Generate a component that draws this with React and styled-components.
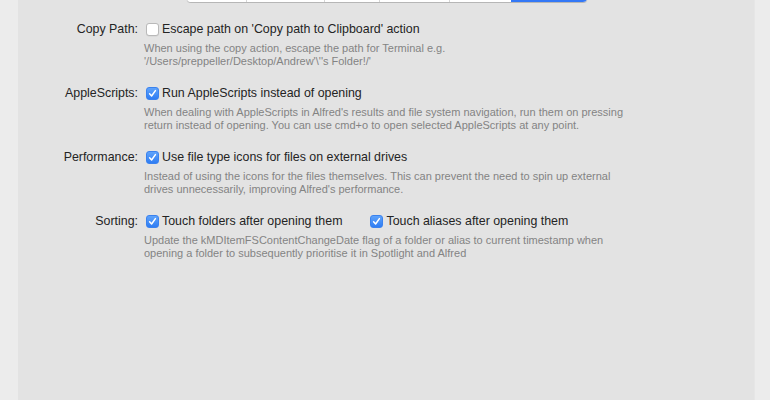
import React from "react";
import styled, { createGlobalStyle } from "styled-components";

const Global = createGlobalStyle`
  html, body { margin: 0; padding: 0; background: #ececec; }
  body { font-family: "Liberation Sans", Arial, sans-serif; }
`;

const Page = styled.div`
  width: 770px;
  height: 400px;
  display: flex;
  background: #ececec;
`;

const Panel = styled.div`
  margin-left: 18px;
  width: 736px;
  height: 400px;
  background: #e3e3e3;
  border-right: 1px solid #e6e6e6;
  display: flex;
  flex-direction: column;
`;

const TabClip = styled.div`
  height: 3px;
  overflow: hidden;
  display: flex;
  align-items: flex-end;
  padding-left: 169px;
`;

const TabBar = styled.div`
  display: flex;
  height: 22px;
  flex-shrink: 0;
  border-radius: 4px;
  background: #fff;
  box-shadow: 0 1px 1px rgba(0, 0, 0, 0.22);
  margin-bottom: 1px;
  overflow: hidden;
`;

const Tab = styled.div`
  width: ${(p) => p.$w}px;
  height: 22px;
  background: ${(p) => (p.$active ? "#3478f6" : "#ffffff")};
  border-left: ${(p) => (p.$first || p.$active ? "none" : "1px solid #d6d6d6")};
  box-sizing: border-box;
`;

const Settings = styled.div`
  padding-top: 18px;
  display: flex;
  flex-direction: column;
  gap: 17px;
`;

const Row = styled.div`
  display: grid;
  grid-template-columns: 120px 1fr;
  column-gap: 6px;
`;

const Label = styled.div`
  text-align: right;
  font-size: 12.4px;
  line-height: 16px;
  color: #242424;
`;

const Body = styled.div`
  display: flex;
  flex-direction: column;
`;

const Options = styled.div`
  display: flex;
  gap: 28px;
  height: 16px;
  align-items: center;
  padding-left: 2px;
`;

const Option = styled.label`
  display: flex;
  align-items: center;
  gap: 3px;
  font-size: 12.4px;
  line-height: 16px;
  color: #242424;
`;

const Box = styled.span`
  width: 13px;
  height: 13px;
  box-sizing: border-box;
  border-radius: 3px;
  display: flex;
  align-items: center;
  justify-content: center;
  background: ${(p) => (p.$checked ? "linear-gradient(#5fa3fb, #2f7df3)" : "#ffffff")};
  border: ${(p) => (p.$checked ? "1px solid #3a82ef" : "1px solid #b9b9b9")};
  box-shadow: ${(p) => (p.$checked ? "none" : "0 0.5px 0 rgba(0,0,0,0.08)")};
`;

const Desc = styled.div`
  margin-top: 5px;
  font-size: 11px;
  line-height: 13px;
  color: #838383;
`;

function Check({ checked }) {
  return (
    <Box $checked={checked}>
      {checked && (
        <svg width="9" height="9" viewBox="0 0 9 9">
          <path d="M1.6 4.8 L3.6 7 L7.4 1.6" fill="none" stroke="#fff" strokeWidth="1.5" strokeLinecap="round" strokeLinejoin="round" />
        </svg>
      )}
    </Box>
  );
}

const tabs = [59, 78, 55, 70, 62, 76];

const rows = [
  {
    label: "Copy Path:",
    options: [{ text: "Escape path on 'Copy path to Clipboard' action", checked: false }],
    desc: ["When using the copy action, escape the path for Terminal e.g.", "'/Users/preppeller/Desktop/Andrew'\\''s Folder!/'"],
  },
  {
    label: "AppleScripts:",
    options: [{ text: "Run AppleScripts instead of opening", checked: true }],
    desc: [
      "When dealing with AppleScripts in Alfred's results and file system navigation, run them on pressing",
      "return instead of opening. You can use cmd+o to open selected AppleScripts at any point.",
    ],
  },
  {
    label: "Performance:",
    options: [{ text: "Use file type icons for files on external drives", checked: true }],
    desc: [
      "Instead of using the icons for the files themselves. This can prevent the need to spin up external",
      "drives unnecessarily, improving Alfred's performance.",
    ],
  },
  {
    label: "Sorting:",
    options: [
      { text: "Touch folders after opening them", checked: true },
      { text: "Touch aliases after opening them", checked: true },
    ],
    desc: [
      "Update the kMDItemFSContentChangeDate flag of a folder or alias to current timestamp when",
      "opening a folder to subsequently prioritise it in Spotlight and Alfred",
    ],
  },
];

export default function App() {
  return (
    <>
      <Global />
      <Page>
        <Panel>
          <TabClip>
            <TabBar>
              {tabs.map((w, i) => (
                <Tab key={i} $w={w} $first={i === 0} $active={i === tabs.length - 1} />
              ))}
            </TabBar>
          </TabClip>
          <Settings>
            {rows.map((r) => (
              <Row key={r.label}>
                <Label>{r.label}</Label>
                <Body>
                  <Options>
                    {r.options.map((o) => (
                      <Option key={o.text}>
                        <Check checked={o.checked} />
                        {o.text}
                      </Option>
                    ))}
                  </Options>
                  <Desc>
                    {r.desc.map((d, i) => (
                      <div key={i}>{d}</div>
                    ))}
                  </Desc>
                </Body>
              </Row>
            ))}
          </Settings>
        </Panel>
      </Page>
    </>
  );
}
